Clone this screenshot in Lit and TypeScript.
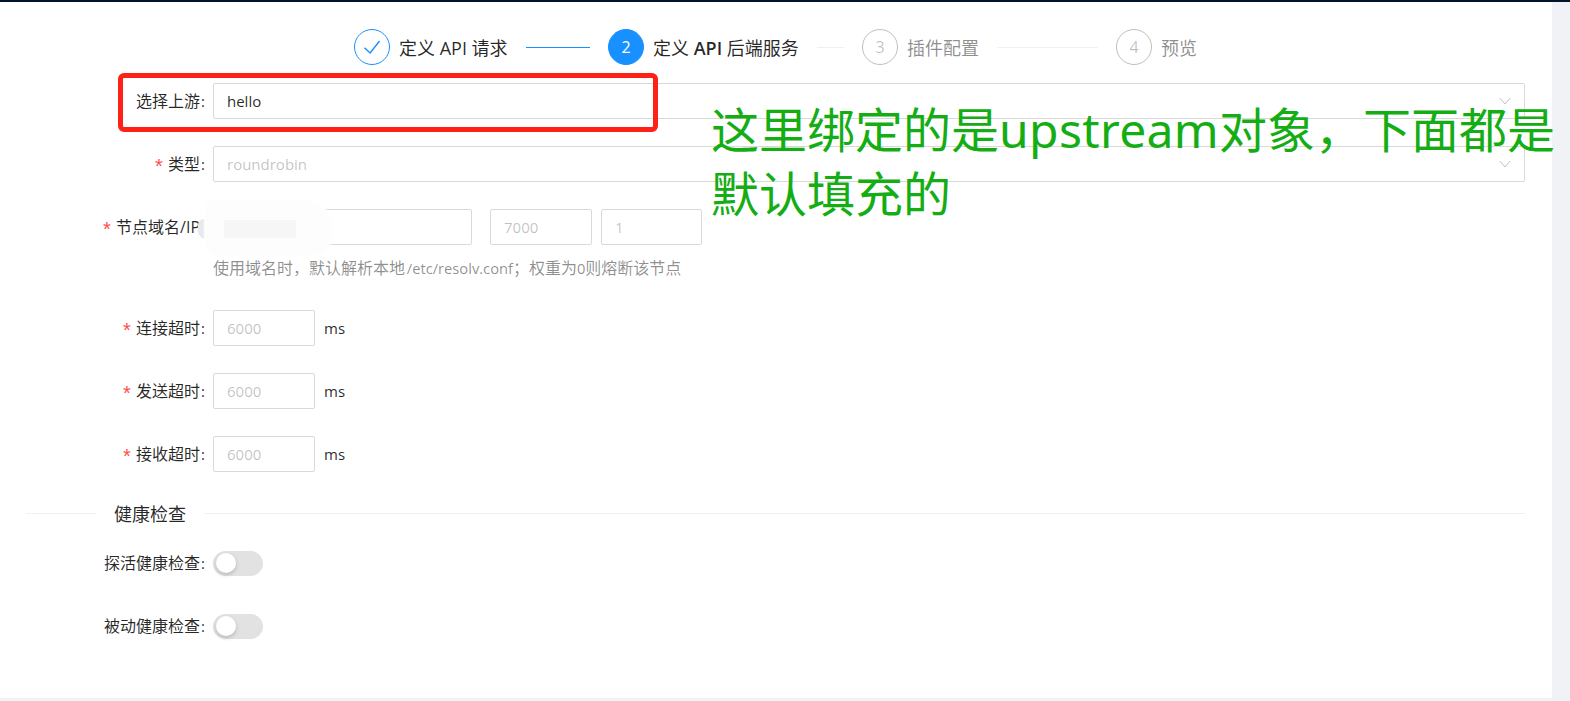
import { LitElement, html, css, svg } from "lit";
import { customElement } from "lit/decorators.js";

const chevron = html`<svg class="chev" viewBox="0 0 12 8" width="12" height="8"><path d="M.8 1l5.2 6 5.2-6" fill="none" stroke="#bfbfbf" stroke-width="1"/></svg>`;
const check = svg`<path d="M10 18.7l6 5.6 10-12.6" fill="none" stroke="#1890ff" stroke-width="1.5"/>`;

@customElement("app-root")
export class AppRoot extends LitElement {
  static styles = css`
    :host {
      display: block;
      position: relative;
      width: 1570px;
      height: 701px;
      overflow: hidden;
      background: #f0f2f5;
      font-family: "Open Sans", "Noto Sans CJK SC", sans-serif;
      font-size: 16px;
      color: rgba(0, 0, 0, 0.85);
    }
    .topbar { height: 2px; background: #001529; }
    .card {
      width: 1552px;
      height: 696px;
      background: #fff;
      box-sizing: border-box;
      padding: 27px 27px 0 26px;
    }
    .steps {
      display: flex;
      align-items: center;
      height: 36px;
      padding-left: 328px;
      margin-bottom: 18px;
    }
    .step { display: flex; align-items: center; width: 254px; flex: none; }
    .dot {
      width: 36px;
      height: 36px;
      flex: none;
      box-sizing: border-box;
      border: 1px solid rgba(0, 0, 0, 0.25);
      border-radius: 50%;
      display: flex;
      align-items: center;
      justify-content: center;
      font-size: 16px;
      color: rgba(0, 0, 0, 0.25);
    }
    .dot.done { border-color: #1890ff; }
    .dot.cur { background: #1890ff; border-color: #1890ff; color: #fff; }
    .st {
      margin-left: 9px;
      font-size: 18px;
      color: rgba(0, 0, 0, 0.45);
      white-space: nowrap;
    }
    .st.on { color: rgba(0, 0, 0, 0.85); }
    .st b { font-weight: 600; }
    .ln { height: 1px; flex: 1; background: #f0f0f0; margin: 0 18px; }
    .ln.blue { background: #1890ff; }

    .row {
      display: grid;
      grid-template-columns: 187px 1fr;
      align-items: start;
      margin-bottom: 27px;
    }
    .lab {
      height: 36px;
      line-height: 36px;
      padding-right: 8px;
      text-align: right;
      white-space: nowrap;
    }
    .colon { margin-left: 1px; font-size: 15px; }
    .star {
      color: #ff4d4f;
      display: inline-block;
      width: 9px;
      margin-right: 4px;
      text-align: left;
      font-family: "Liberation Sans", sans-serif;
      font-size: 20px;
      vertical-align: -3px;
      line-height: 1;
    }
    .ctl { display: flex; align-items: center; }
    .inp {
      box-sizing: border-box;
      height: 36px;
      flex: none;
      border: 1px solid #d9d9d9;
      border-radius: 2px;
      padding: 0 13px;
      font-size: 15px;
      color: rgba(0, 0, 0, 0.25);
      display: flex;
      align-items: center;
      justify-content: space-between;
      background: #fff;
    }
    .inp.full { width: 100%; flex: 1; }
    .inp.val { color: rgba(0, 0, 0, 0.85); }
    .inp.node { width: 259px; }
    .inp.port { width: 102px; margin-left: 18px; }
    .inp.wt { width: 101px; margin-left: 9px; }
    .inp.sm { width: 102px; }
    .unit { margin-left: 9px; font-size: 15px; }
    .help {
      grid-column: 2;
      color: rgba(0, 0, 0, 0.45);
      margin-top: 13px;
      line-height: 20px;
      white-space: nowrap;
    }
    .help b { font-weight: 400; font-size: 14.7px; word-spacing: -2px; }
    .row.node { margin-bottom: 32px; }
    .divider {
      display: flex;
      align-items: center;
      height: 24px;
      margin-top: 29px;
      margin-bottom: 26px;
      font-size: 18px;
    }
    .divider i { height: 1px; background: #f0f0f0; display: block; }
    .divider i:first-child { width: 70px; }
    .divider i:last-child { flex: 1; }
    .divider span { padding: 0 18px; }
    .sw-row {
      display: grid;
      grid-template-columns: 187px 1fr;
      align-items: center;
      height: 25px;
      margin-bottom: 38px;
    }
    .sw-row .lab { height: 25px; line-height: 25px; }
    .sw {
      width: 50px;
      height: 25px;
      border-radius: 13px;
      background: #e2e2e2;
      position: relative;
    }
    .sw::after {
      content: "";
      position: absolute;
      left: 3px;
      top: 2px;
      width: 20px;
      height: 20px;
      border-radius: 50%;
      background: #fff;
      box-shadow: 0 2px 4px rgba(0, 35, 11, 0.2);
    }
    .redbox {
      position: absolute;
      left: 118px;
      top: 73px;
      width: 540px;
      height: 59px;
      box-sizing: border-box;
      border: 5px solid #ff2116;
      border-radius: 6px;
    }
    .note {
      position: absolute;
      left: 711px;
      top: 98px;
      width: 850px;
      font-family: "Noto Sans", "Noto Sans CJK SC", sans-serif;
      font-size: 48px;
      line-height: 64px;
      color: #14ad14;
      white-space: pre-line;
    }
    .note span { letter-spacing: 0.35px; }
    .smudge {
      position: absolute;
      left: 198px;
      top: 219px;
      width: 14px;
      height: 20px;
      border-radius: 6px 0 0 8px;
      background: #e6eaee;
    }
    .blur {
      position: absolute;
      left: 205px;
      top: 200px;
      width: 128px;
      height: 56px;
      border-radius: 10px 30px 24px 14px;
      background: #fdfdfd;
      box-shadow: 0 0 2px 1px #fff;
    }
    .blur2 {
      position: absolute;
      left: 224px;
      top: 220px;
      width: 72px;
      height: 18px;
      background: #f6f6f6;
    }
  `;

  render() {
    const colon = html`<span class="colon">:</span>`;
    return html`
      <div class="topbar"></div>
      <div class="card">
        <div class="steps">
          <div class="step">
            <div class="dot done"><svg viewBox="0 0 36 36" width="36" height="36">${check}</svg></div>
            <span class="st on">定义 API 请求</span>
            <div class="ln blue"></div>
          </div>
          <div class="step">
            <div class="dot cur">2</div>
            <span class="st on">定义 <b>API</b> 后端服务</span>
            <div class="ln"></div>
          </div>
          <div class="step">
            <div class="dot">3</div>
            <span class="st">插件配置</span>
            <div class="ln"></div>
          </div>
          <div class="step">
            <div class="dot">4</div>
            <span class="st">预览</span>
          </div>
        </div>

        <div class="row">
          <div class="lab">选择上游${colon}</div>
          <div class="ctl"><div class="inp full val"><span>hello</span>${chevron}</div></div>
        </div>
        <div class="row">
          <div class="lab"><span class="star">*</span>类型${colon}</div>
          <div class="ctl"><div class="inp full"><span>roundrobin</span>${chevron}</div></div>
        </div>
        <div class="row node">
          <div class="lab"><span class="star">*</span>节点域名/IP${colon}</div>
          <div class="ctl">
            <div class="inp node"></div>
            <div class="inp port">7000</div>
            <div class="inp wt">1</div>
          </div>
          <div class="help">使用域名时，默认解析本地<b> /etc/resolv.conf</b>；权重为<b>0</b>则熔断该节点</div>
        </div>
        ${["连接超时", "发送超时", "接收超时"].map(
          (t) => html`<div class="row">
            <div class="lab"><span class="star">*</span>${t}${colon}</div>
            <div class="ctl"><div class="inp sm">6000</div><span class="unit">ms</span></div>
          </div>`
        )}
        <div class="divider"><i></i><span>健康检查</span><i></i></div>
        <div class="sw-row"><div class="lab">探活健康检查${colon}</div><div class="sw"></div></div>
        <div class="sw-row"><div class="lab">被动健康检查${colon}</div><div class="sw"></div></div>
      </div>
      <div class="smudge"></div>
      <div class="blur"></div>
      <div class="blur2"></div>
      <div class="redbox"></div>
      <div class="note">这里绑定的是<span>upstream</span>对象，下面都是
默认填充的</div>
    `;
  }
}
